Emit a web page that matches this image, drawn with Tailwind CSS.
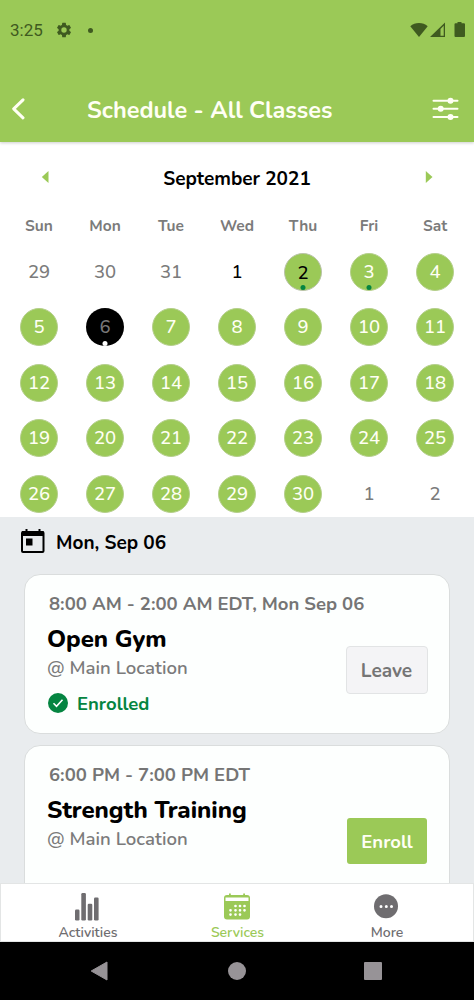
<!DOCTYPE html>
<html lang="en">
<head>
    <meta charset="UTF-8">
    <meta name="viewport" content="width=device-width, initial-scale=1.0">
    <title>Schedule - All Classes</title>
    <script src="https://cdn.jsdelivr.net/npm/@tailwindcss/browser@4"></script>
</head>
<body class="bg-black font-['Nunito','Lato',sans-serif]">
    <div class="flex h-[1000px] w-[474px] flex-col overflow-hidden bg-white">

        <!-- Header -->
        <header class="z-10 h-[142px] shrink-0 bg-[#9bc957] shadow-[0_1px_3px_rgba(0,0,0,0.2)]">
            <div class="flex h-[60px] items-center pl-[10px] pr-[9px] text-[#3f5a20]">
                <span class="w-[34px] whitespace-nowrap font-['Roboto',sans-serif] text-[17px] leading-5">3:25</span>
                <svg class="ml-[11px] h-[18px] w-[18px]" viewBox="0 0 24 24" fill="currentColor"><path d="M19.14 12.94c.04-.3.06-.61.06-.94s-.02-.64-.07-.94l2.03-1.58a.5.5 0 0 0 .12-.61l-1.92-3.32a.49.49 0 0 0-.59-.22l-2.39.96a7 7 0 0 0-1.62-.94l-.36-2.54A.48.48 0 0 0 13.92 2.4h-3.84a.48.48 0 0 0-.47.41l-.36 2.54a7 7 0 0 0-1.62.94l-2.39-.96a.48.48 0 0 0-.59.22L2.74 8.87a.48.48 0 0 0 .12.61l2.03 1.58a6 6 0 0 0 0 1.88l-2.03 1.58a.5.5 0 0 0-.12.61l1.92 3.32c.12.22.37.29.59.22l2.39-.96c.5.38 1.03.7 1.62.94l.36 2.54c.05.24.24.41.48.41h3.84c.24 0 .44-.17.47-.41l.36-2.54a7 7 0 0 0 1.62-.94l2.39.96c.22.08.47 0 .59-.22l1.92-3.32a.48.48 0 0 0-.12-.61zM12 15.6a3.6 3.6 0 1 1 0-7.2 3.6 3.6 0 0 1 0 7.2z"/></svg>
                <span class="ml-[15px] h-[5px] w-[5px] rounded-full bg-[#3f5a20]"></span>
                <div class="ml-auto flex items-center">
                    <svg class="h-4 w-[18px]" viewBox="0 0 18 16" fill="currentColor"><path d="M9 15 .3 4.3C2.7 2 5.7 1 9 1s6.3 1 8.7 3.3z"/></svg>
                    <svg class="ml-[2px] h-4 w-4" viewBox="0 0 16 16" fill="currentColor"><path fill-rule="evenodd" d="M0 15 15 .5V15zM10.500 7v6.800h3.200V3.800z"/></svg>
                    <svg class="ml-2 h-4 w-[11px]" viewBox="0 0 11 16" fill="currentColor"><path d="M3.500 0h4v1.200H10a1 1 0 0 1 1 1V14a1 1 0 0 1-1 1H1.500a1 1 0 0 1-1-1V2.200a1 1 0 0 1 1-1h2z"/></svg>
                </div>
            </div>
            <div class="flex h-[82px] items-start pl-3 pr-[15px] text-[#fffff4]">
                <svg class="mt-[37px] h-6 w-[13px]" viewBox="0 0 13 24" fill="none" stroke="currentColor" stroke-width="3" stroke-linecap="round" stroke-linejoin="round"><path d="M11 2.800 1.700 11.800l9.300 9"/></svg>
                <h1 class="ml-[62px] mt-[35px] whitespace-nowrap text-[23.5px] font-bold leading-[30px]">Schedule - All Classes</h1>
                <svg class="ml-auto mt-[37px] h-6 w-[27px]" viewBox="0 0 27 24" fill="currentColor" stroke="currentColor" stroke-width="2" stroke-linecap="round"><path d="M1.500 3.700h24M1.500 11.800h24M1.500 19.900h24"/><circle cx="18.500" cy="3.700" r="2"/><circle cx="8.700" cy="11.800" r="2"/><circle cx="18.500" cy="19.900" r="2"/></svg>
            </div>
        </header>

        <!-- Calendar -->
        <section class="h-[375px] shrink-0 pt-[23px]">
            <div class="flex h-6 items-center justify-between px-[41px]">
                <svg class="h-3 w-2" viewBox="0 0 8 12" fill="#9bc957"><path d="M7.500 0v12L.8 6z"/></svg>
                <h2 class="mt-[3px] whitespace-nowrap text-[19px] font-bold leading-6 text-black">September 2021</h2>
                <svg class="h-3 w-2" viewBox="0 0 8 12" fill="#9bc957"><path d="M.8 0v12l6.700-6z"/></svg>
            </div>
            <div id="weekdays" class="mt-[27px] grid h-5 grid-cols-7 px-[6px] text-center text-[15.5px] font-bold leading-5 text-[#7b7b7b]"></div>
            <div id="days" class="mt-[8px] grid auto-rows-[55.5px] grid-cols-7 px-[6px]"></div>
        </section>

        <!-- Classes of the selected day -->
        <main class="h-[366px] shrink-0 overflow-hidden bg-[#e9ecee]">
            <div class="flex h-[57px] items-start pl-[21px]">
                <svg class="mt-[12px] h-6 w-6" viewBox="0 0 24 24" fill="none" stroke="#000" stroke-width="2"><rect x="1" y="3" width="21.500" height="20" rx="1"/><path d="M1 4.500h21.500" stroke-width="5"/><path d="M5.500 0v3M18.500 0v3"/><path d="M5 9.500h6.500v7H5z" fill="#000" stroke="none"/></svg>
                <h3 class="ml-[11px] mt-[14px] whitespace-nowrap text-[19px] font-bold leading-6 text-black">Mon, Sep 06</h3>
            </div>

            <article class="mx-6 h-[160px] rounded-[16px] border border-[#dadddd] bg-[#fdfffe] px-[22px] pt-[17px]">
                <p class="ml-[2px] whitespace-nowrap text-[18.5px] font-bold leading-6 text-[#757575]">8:00 AM - 2:00 AM EDT, Mon Sep 06</p>
                <div class="flex justify-between">
                    <div>
                        <h4 class="mt-[8px] whitespace-nowrap text-[24px] font-extrabold leading-[30px] tracking-[-0.05px] text-black">Open Gym</h4>
                        <p class="mt-[2px] whitespace-nowrap text-[18.6px] font-semibold leading-6 text-[#7b7b7b]">@ Main Location</p>
                        <div class="mt-3 flex items-center text-[#058541]">
                            <svg class="-mt-[2px] ml-px h-5 w-5" viewBox="0 0 20 20"><circle cx="10" cy="10" r="10" fill="currentColor"/><path d="m5.500 10.300 3 3 6-6.600" fill="none" stroke="#fff" stroke-width="1.600"/></svg>
                            <span class="ml-[9px] whitespace-nowrap text-[18.5px] font-bold leading-6">Enrolled</span>
                        </div>
                    </div>
                    <button class="-mr-[1px] mt-[30px] h-12 w-[82px] rounded-[4px] border border-[#e2e4e5] bg-[#f4f4f6] pr-px pt-[3px] text-[19px] font-bold text-[#757575]">Leave</button>
                </div>
            </article>

            <article class="mx-6 mt-[11px] h-[160px] rounded-[16px] border border-[#dadddd] bg-[#fdfffe] px-[22px] pt-[17px]">
                <p class="ml-[2px] whitespace-nowrap text-[18.5px] font-bold leading-6 text-[#757575]">6:00 PM - 7:00 PM EDT</p>
                <div class="flex justify-between">
                    <div>
                        <h4 class="mt-[8px] whitespace-nowrap text-[24px] font-extrabold leading-[30px] tracking-[-0.05px] text-black">Strength Training</h4>
                        <p class="mt-[2px] whitespace-nowrap text-[18.6px] font-semibold leading-6 text-[#7b7b7b]">@ Main Location</p>
                    </div>
                    <button class="mt-[31px] h-[46px] w-20 rounded-[3px] bg-[#9bc957] pt-[3px] text-[18.5px] font-bold text-[#fffff4]">Enroll</button>
                </div>
            </article>
        </main>

        <!-- Tabs -->
        <nav class="flex h-[59px] shrink-0 justify-between border border-[#e3e5e5] bg-white pl-[37px] pr-[36px] pt-[9px] text-[14px] font-semibold leading-[18px] text-[#6f6d70]">
            <div class="flex w-[100px] flex-col items-center">
                <svg class="mr-[2px] h-7 w-6 shrink-0" viewBox="0 0 24 28" fill="currentColor"><rect x="0" y="16.500" width="4.500" height="11" rx="1.200"/><rect x="6.300" y="0" width="4.600" height="27.500" rx="1.200"/><rect x="12.700" y="10.800" width="4.600" height="16.700" rx="1.200"/><rect x="19" y="4.600" width="4.600" height="22.900" rx="1.200"/></svg>
                <span class="mt-[3px]">Activities</span>
            </div>
            <div class="flex w-[100px] flex-col items-center text-[#9bc957]">
                <svg class="mr-px h-7 w-[26px] shrink-0" viewBox="0 0 26 28" fill="currentColor"><rect x="0" y="2" width="26" height="24.500" rx="3"/><path d="M5 .5h1.800v3H5zM19.200.5H21v3h-1.800z"/><path d="M1.500 4.500h23V8h-23z" fill="#fff"/><path d="M11.500 13h.01M16 13h.01M20.500 13h.01M6.500 17.300h.01M11.500 17.300h.01M16 17.300h.01M20.500 17.300h.01M6.500 21.600h.01M11.500 21.600h.01M16 21.600h.01" fill="none" stroke="#fff" stroke-width="2.700" stroke-linecap="round"/></svg>
                <span class="mt-[3px]">Services</span>
            </div>
            <div class="flex w-[100px] flex-col items-center">
                <svg class="mr-[2px] h-7 w-6 shrink-0" viewBox="0 0 24 28" fill="currentColor"><circle cx="12" cy="13.200" r="12"/><path d="M7 13.400h.01M12.300 13.400h.01M17.500 13.400h.01" stroke="#fff" stroke-width="3" stroke-linecap="round"/></svg>
                <span class="mt-[3px]">More</span>
            </div>
        </nav>

        <!-- System navigation -->
        <footer class="flex h-[58px] shrink-0 items-center justify-between bg-black pl-[90px] pr-[92px] text-[#979397]">
            <svg class="h-5 w-[18px]" viewBox="0 0 18 20" fill="currentColor" stroke="currentColor" stroke-linejoin="round"><path d="M17 1v18L1.200 10z"/></svg>
            <span class="ml-[2px] h-[18px] w-[18px] rounded-full bg-[#979397]"></span>
            <span class="h-[18px] w-[18px] rounded-[1px] bg-[#979397]"></span>
        </footer>
    </div>

    <script>
        const weekdays = ['Sun', 'Mon', 'Tue', 'Wed', 'Thu', 'Fri', 'Sat'];
        document.getElementById('weekdays').innerHTML = weekdays.map(d => `<span>${d}</span>`).join('');

        // 29 Aug - 2 Oct
        const dates = [29, 30, 31];
        for (let i = 1; i <= 30; i++) dates.push(i);
        dates.push(1, 2);

        const dots = { 2: 'bg-[#058541]', 3: 'bg-[#058541]', 6: 'bg-white' };

        document.getElementById('days').innerHTML = dates.map((date, i) => {
            const outside = i < 3 || i > 32;
            let color = 'bg-[#9bc957] border border-[#b5cf8c] text-[#fffff4]';
            if (outside) color = 'text-[#7b7b7b]';
            else if (date === 1) color = 'text-black';
            else if (date === 2) color = 'bg-[#9bc957] border border-[#b9c3a8] pt-[2px] text-black';
            else if (date === 6) color = 'bg-black text-[#777777]';
            const dot = !outside && dots[date]
                ? `<span class="absolute bottom-0 left-1/2 h-[5px] w-[5px] -translate-x-1/2 rounded-full ${dots[date]}"></span>`
                : '';
            return `<div class="flex items-center justify-center"><div class="relative flex h-[38px] w-[38px] items-center justify-center rounded-full text-[18.5px] font-medium leading-6 ${color}">${date}${dot}</div></div>`;
        }).join('');
    </script>
</body>
</html>
